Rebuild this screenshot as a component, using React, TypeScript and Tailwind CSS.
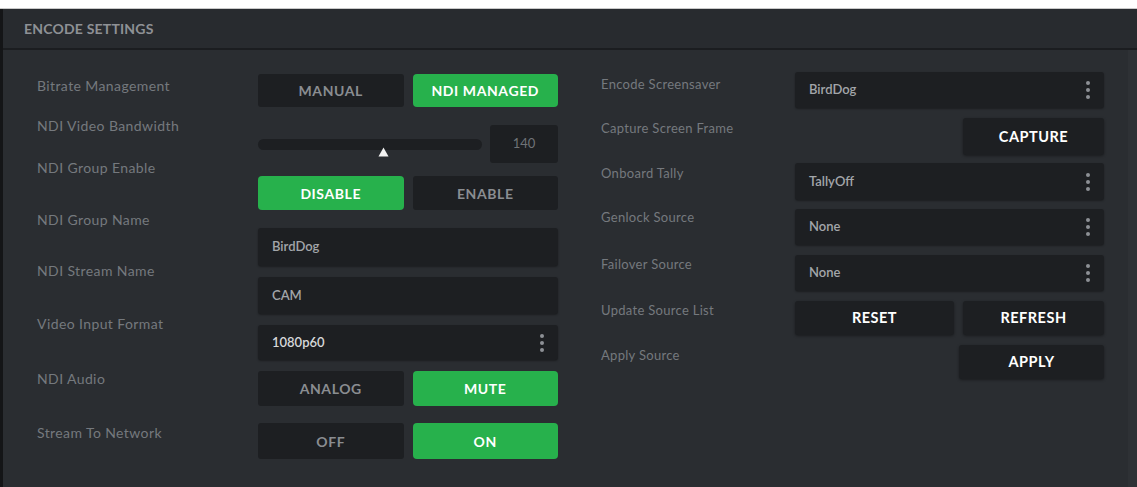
import React from "react";

const font = { fontFamily: "Lato, 'Open Sans', sans-serif" };

const Label = ({ text, mt, big }: { text: string; mt: string; big?: boolean }) => (
  <div
    className={`${mt} h-4 leading-4 ${big ? "text-[14px] tracking-[0.4px]" : "text-[13px] tracking-[0.3px]"} text-[#75797e] whitespace-nowrap`}
  >
    {text}
  </div>
);

const Dots = () => (
  <div className="flex flex-col gap-[3px] mr-[14px]">
    <span className="w-[4px] h-[4px] rounded-full bg-[#8d9095]" />
    <span className="w-[4px] h-[4px] rounded-full bg-[#8d9095]" />
    <span className="w-[4px] h-[4px] rounded-full bg-[#8d9095]" />
  </div>
);

const Toggle = ({
  left,
  right,
  active,
  mt,
  h,
}: {
  left: string;
  right: string;
  active: "left" | "right";
  mt: string;
  h: string;
}) => {
  const on = "bg-[#27b14c] text-white rounded-[4px]";
  const off = "bg-[#1d1f22] text-[#8a8d91] rounded-[3px]";
  return (
    <div className={`${mt} ${h} flex gap-[9px]`}>
      <div className={`flex-1 flex items-center justify-center text-[14px] font-bold tracking-[0.6px] ${active === "left" ? on : off}`}>
        {left}
      </div>
      <div className={`flex-1 flex items-center justify-center text-[14px] font-bold tracking-[0.6px] ${active === "right" ? on : off}`}>
        {right}
      </div>
    </div>
  );
};

const Field = ({ value, mt, h, dots, bright }: { value: string; mt: string; h: string; dots?: boolean; bright?: boolean }) => (
  <div className={`${mt} ${h} bg-[#1d1f22] rounded-[3px] flex items-center justify-between pl-[14px] shadow-[0_1px_2px_rgba(0,0,0,0.35)]`}>
    <span className={`text-[13px] font-semibold ${bright ? "text-[#d6d8da]" : "text-[#a3a6aa]"}`}>{value}</span>
    {dots && <Dots />}
  </div>
);

const Action = ({ text, w, mt, h }: { text: string; w: string; mt?: string; h?: string }) => (
  <div
    className={`${w} ${mt ?? ""} ${h ?? ""} bg-[#1d1f22] rounded-[3px] flex items-center justify-center text-[14.5px] font-bold text-white tracking-[0.5px] shadow-[0_1px_3px_rgba(0,0,0,0.4)]`}
  >
    {text}
  </div>
);

export default function App() {
  return (
    <div className="w-[1137px] h-[487px] bg-white flex flex-col overflow-hidden" style={font}>
      <div className="h-[9px] border-b border-[#c9c9c9]" />
      <div className="flex-1 flex flex-col bg-[#2a2d31] border-l-[3px] border-l-[#141517]">
        <div className="h-[41px] bg-[#282b2f] border-b-2 border-[#1b1d20] flex items-center pl-[21px]">
          <span className="text-[14px] font-bold text-[#8e9195] tracking-[0.2px]">ENCODE SETTINGS</span>
        </div>

        <div className="flex-1 flex">
          {/* left labels */}
          <div className="w-[255px] pl-[34px] flex flex-col">
            <Label big text="Bitrate Management" mt="mt-[28px]" />
            <Label big text="NDI Video Bandwidth" mt="mt-[24px]" />
            <Label big text="NDI Group Enable" mt="mt-[26px]" />
            <Label big text="NDI Group Name" mt="mt-[36px]" />
            <Label big text="NDI Stream Name" mt="mt-[35px]" />
            <Label big text="Video Input Format" mt="mt-[37px]" />
            <Label big text="NDI Audio" mt="mt-[39px]" />
            <Label big text="Stream To Network" mt="mt-[38px]" />
          </div>

          {/* left controls */}
          <div className="w-[300px] flex flex-col">
            <Toggle left="MANUAL" right="NDI MANAGED" active="right" mt="mt-[24px]" h="h-[33px]" />
            <div className="mt-[18px] h-[38px] flex items-center gap-[8px]">
              <div className="relative flex-1 h-[11px] bg-[#1d1f22] rounded-full">
                <svg className="absolute left-[120px] top-[8px]" width="11" height="10" viewBox="0 0 11 10">
                  <path d="M5.5 0.5 L10.5 9.5 L0.5 9.5 Z" fill="#f2f2f2" />
                </svg>
              </div>
              <div className="w-[68px] h-full bg-[#1d1f22] rounded-[3px] flex items-center justify-center text-[13px] text-[#6f7377]">
                140
              </div>
            </div>
            <Toggle left="DISABLE" right="ENABLE" active="left" mt="mt-[13px]" h="h-[34px]" />
            <Field value="BirdDog" mt="mt-[18px]" h="h-[38px]" />
            <Field value="CAM" mt="mt-[11px]" h="h-[37px]" />
            <Field value="1080p60" mt="mt-[11px]" h="h-[35px]" dots bright />
            <Toggle left="ANALOG" right="MUTE" active="right" mt="mt-[11px]" h="h-[35px]" />
            <Toggle left="OFF" right="ON" active="right" mt="mt-[17px]" h="h-[36px]" />
          </div>

          {/* right labels */}
          <div className="w-[237px] pl-[43px] flex flex-col">
            <Label text="Encode Screensaver" mt="mt-[26px]" />
            <Label text="Capture Screen Frame" mt="mt-[28px]" />
            <Label text="Onboard Tally" mt="mt-[29px]" />
            <Label text="Genlock Source" mt="mt-[28px]" />
            <Label text="Failover Source" mt="mt-[31px]" />
            <Label text="Update Source List" mt="mt-[30px]" />
            <Label text="Apply Source" mt="mt-[29px]" />
          </div>

          {/* right controls */}
          <div className="w-[309px] flex flex-col">
            <Field value="BirdDog" mt="mt-[22px]" h="h-[36px]" dots />
            <div className="mt-[10px] flex justify-end">
              <Action text="CAPTURE" w="w-[141px]" h="h-[37px]" />
            </div>
            <Field value="TallyOff" mt="mt-[8px]" h="h-[37px]" dots />
            <Field value="None" mt="mt-[9px]" h="h-[36px]" dots />
            <Field value="None" mt="mt-[10px]" h="h-[36px]" dots />
            <div className="mt-[10px] h-[34px] flex gap-[9px]">
              <Action text="RESET" w="flex-1" />
              <Action text="REFRESH" w="w-[141px]" />
            </div>
            <div className="mt-[10px] flex justify-end">
              <Action text="APPLY" w="w-[145px]" h="h-[34px]" />
            </div>
          </div>

          <div className="flex-1 flex justify-end">
            <div className="w-[9px] bg-[#2e3135]" />
          </div>
        </div>
      </div>
    </div>
  );
}
